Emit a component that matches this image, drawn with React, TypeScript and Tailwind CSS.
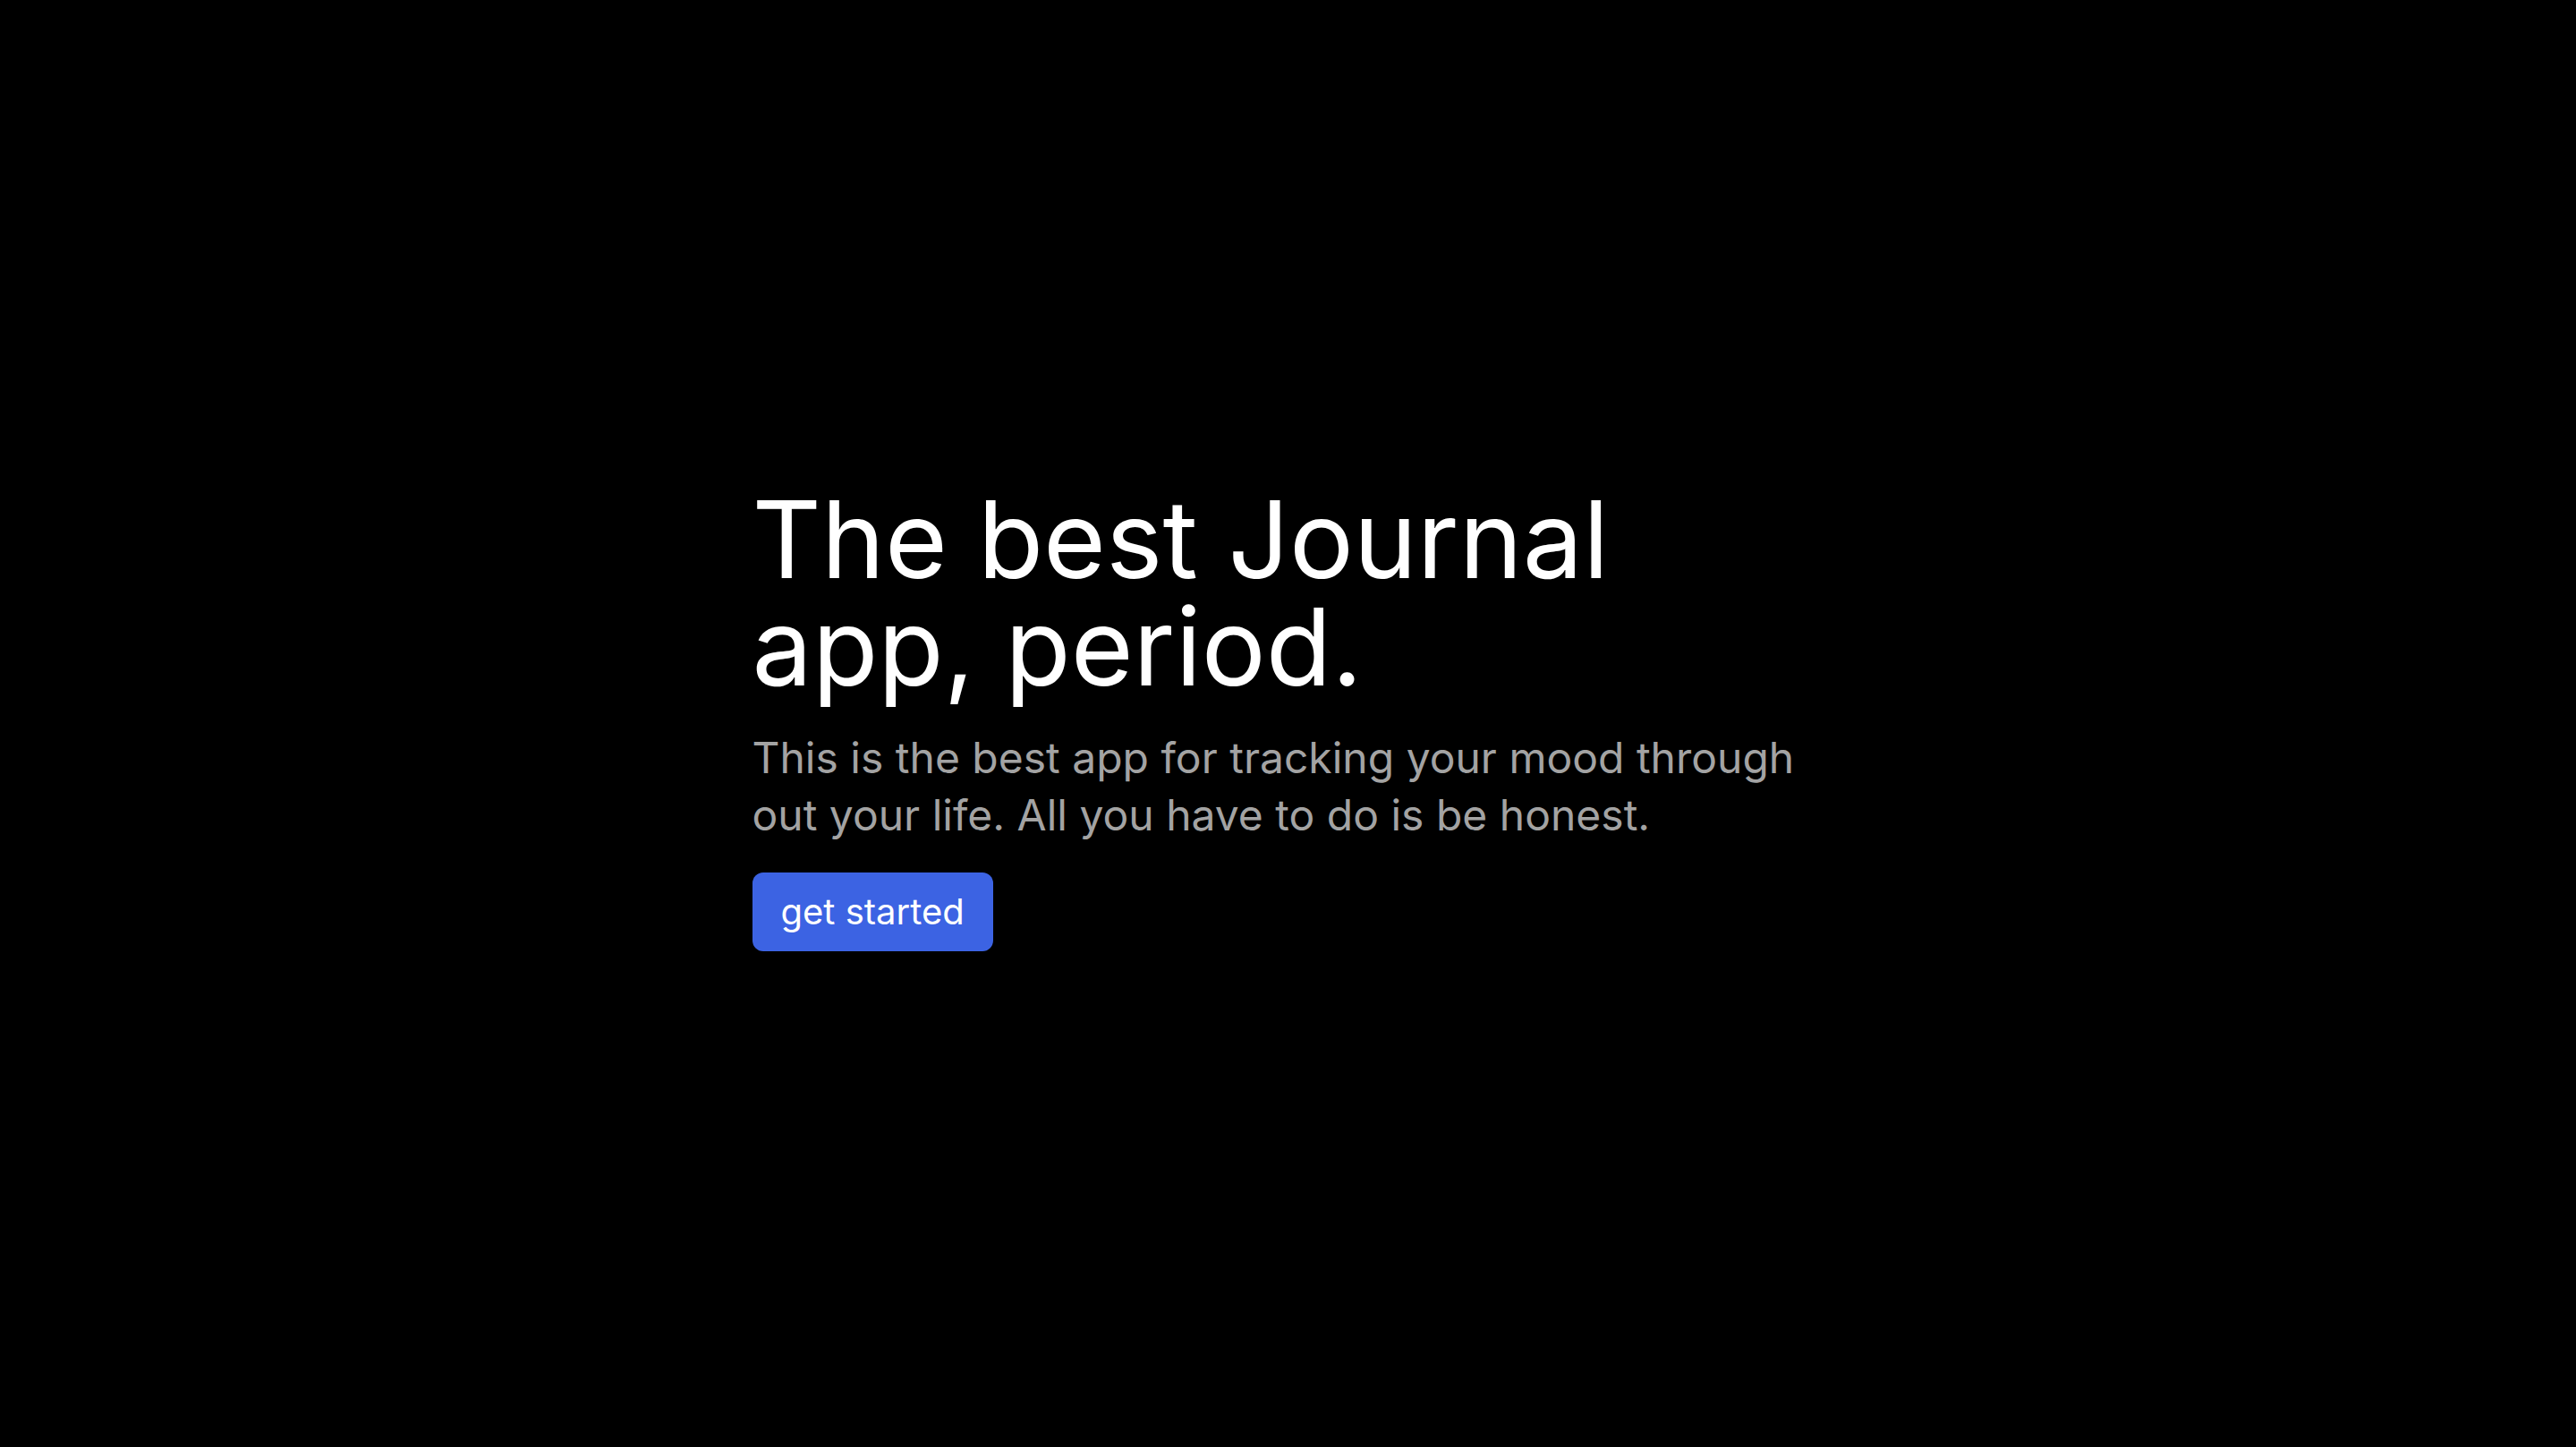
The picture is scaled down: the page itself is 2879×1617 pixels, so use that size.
import React from 'react';

const App: React.FC = () => {
  return (
    <main
      className="min-h-screen w-full bg-black flex items-center justify-center pb-[11px]"
      style={{ fontFamily: 'Inter, "Noto Sans", sans-serif' }}
    >
      <div className="w-[1198px] flex flex-col items-start">
        {/* Hero heading */}
        <h1 className="text-white text-[120px] leading-none font-normal">
          The best Journal app, period.
        </h1>
        <p className="mt-8 text-[#a3a3a3] text-[48px] leading-[64px]">
          This is the best app for tracking your mood through out your life. All you have to do is be honest.
        </p>
        <button className="mt-8 bg-[#3c63e3] text-white text-[40px] leading-[56px] px-8 py-4 rounded-xl">
          get started
        </button>
      </div>
    </main>
  );
};

export default App;
